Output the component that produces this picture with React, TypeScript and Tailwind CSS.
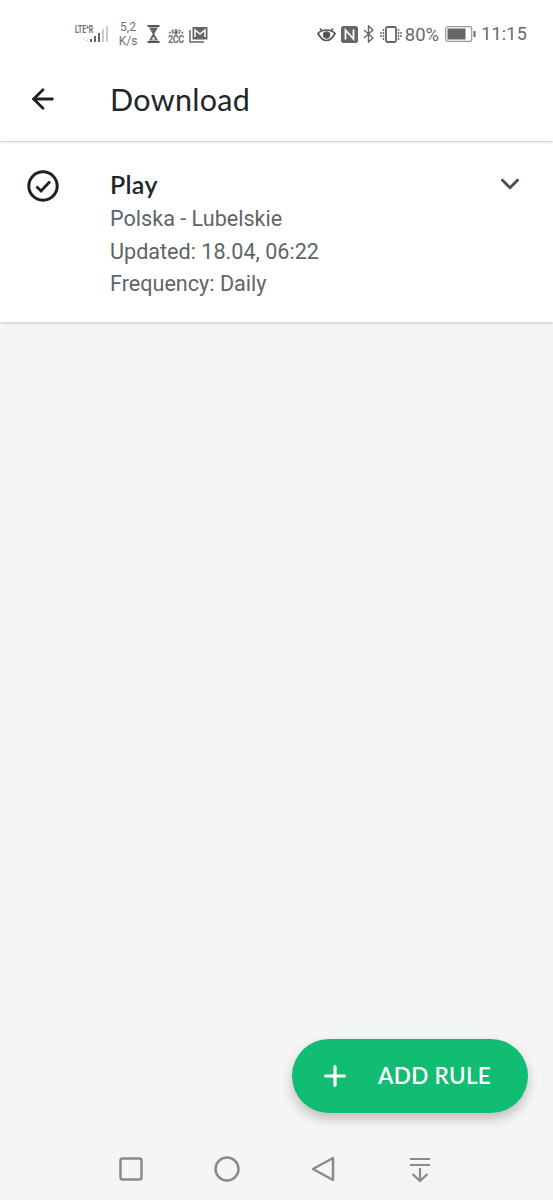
import { ArrowLeft, ChevronDown, Plus } from 'lucide-react'

const roboto = { fontFamily: 'Roboto, sans-serif' }
const heading = { fontFamily: 'Lato, sans-serif' }

function StatusLeft() {
  return (
    <div className="flex items-center text-[#6f6f6f]">
      <div className="relative w-[34px] h-[20px]">
        <span className="absolute left-0 top-[0px] text-[11px] leading-[11px] font-bold scale-x-[0.62] origin-left whitespace-nowrap" style={roboto}>LTE⁺R</span>
        <span className="absolute left-[7px] top-[11px] text-[7px] leading-[7px] text-[#aaa]">↑↓</span>
        <svg className="absolute left-[14px] top-[1px]" width="20" height="18" viewBox="0 0 20 18">
          <rect x="1" y="14" width="2" height="3" fill="#666" />
          <rect x="5" y="11" width="2" height="6" fill="#666" />
          <rect x="9" y="8" width="2" height="9" fill="#666" />
          <rect x="13" y="4" width="2" height="13" fill="#ccc" />
          <rect x="17" y="1" width="2" height="16" fill="#ccc" />
        </svg>
      </div>
      <div className="ml-[9px] w-[20px] text-center text-[12px] leading-[14px]" style={roboto}>5,2<br />K/s</div>
      <svg className="ml-[8px]" width="15" height="18" viewBox="0 0 15 18">
        <path d="M1.500 1h12M1.500 17h12" stroke="#555" strokeWidth="2" />
        <path d="M3 2.500h9L8.300 9 12 15.500H3L6.700 9z" fill="#666" />
        <path d="M5.500 14.500 7.500 12l2 2.500z" fill="#fff" />
      </svg>
      <div className="ml-[6px] relative w-[18px] h-[20px]">
        <svg className="absolute left-0 top-0" width="18" height="11" viewBox="0 0 18 11" fill="none" stroke="#666" strokeWidth="1.300">
          <path d="M2 9.500a8.500 8.500 0 0 1 14 0M5 9.500a4.800 4.800 0 0 1 8 0" strokeDasharray="2.500 1" />
          <circle cx="9" cy="9" r="1" fill="#666" />
        </svg>
        <span className="absolute left-[1px] top-[11px] text-[10px] leading-[10px] font-bold tracking-[-0.5px] scale-x-90 origin-left" style={roboto}>2CC</span>
      </div>
      <svg className="ml-[4px]" width="19" height="17" viewBox="0 0 19 17">
        <path d="M1 4v12h14" fill="none" stroke="#666" strokeWidth="1.500" />
        <rect x="3.500" y="1" width="15" height="12.500" fill="#666" />
        <path d="M6 11V4l5 4 5-4v7" fill="none" stroke="#fff" strokeWidth="1.500" />
      </svg>
    </div>
  )
}

function StatusRight() {
  return (
    <div className="flex items-center text-[#6a6a6a]">
      <svg width="19" height="15" viewBox="0 0 19 15" fill="none" stroke="#555" strokeWidth="1.700">
        <path d="M1 6.500C3.500 4 6 3 9.500 3S15.500 4 18 6.500C15.500 11 13 13.500 9.500 13.500S3.500 11 1 6.500z" />
        <circle cx="9.500" cy="8" r="2.800" fill="#555" />
        <path d="M3 1.500 5 4M16 1.500 14 4" />
      </svg>
      <svg className="ml-[5px]" width="17" height="17" viewBox="0 0 17 17">
        <rect width="17" height="17" rx="2.500" fill="#666" />
        <path d="M4.500 13.500V4L12.500 13V3.500" fill="none" stroke="#fff" strokeWidth="1.800" />
      </svg>
      <svg className="ml-[5px]" width="11" height="18" viewBox="0 0 11 18" fill="none" stroke="#666" strokeWidth="1.400">
        <path d="M1 5l9 8-4.500 4V1L10 5l-9 8" />
      </svg>
      <svg className="ml-[6px]" width="22" height="17" viewBox="0 0 22 17" fill="none" stroke="#666" strokeWidth="1.400">
        <rect x="6" y="1" width="10" height="15" rx="1.500" strokeWidth="1.800" />
        <path d="M3.500 3v11M1 6v5M18.500 3v11M21 6v5" strokeDasharray="2 1" />
      </svg>
      <span className="ml-[3px] mr-[2px] text-[18.500px] leading-none translate-y-[1px]" style={roboto}>80%</span>
      <svg className="ml-[4px]" width="31" height="16" viewBox="0 0 31 16">
        <rect x="0.700" y="0.700" width="26" height="14.600" rx="2" fill="none" stroke="#999" strokeWidth="1.200" />
        <rect x="2.500" y="2.500" width="18" height="11" fill="#666" />
        <rect x="28.500" y="5" width="2" height="6" fill="#666" />
      </svg>
      <span className="ml-[5px] text-[18px] leading-none tracking-[0.2px]" style={roboto}>11:15</span>
    </div>
  )
}

export default function App() {
  return (
    <div className="w-[553px] h-[1200px] bg-[#f5f5f5] flex flex-col overflow-hidden relative">
      <div className="bg-white h-[141px] shrink-0 shadow-[0_1px_3px_rgba(0,0,0,0.16)] z-10">
        <div className="h-[68px] flex items-center justify-between pl-[75px] pr-[26px]">
          <StatusLeft />
          <StatusRight />
        </div>
        <div className="flex items-center h-[62px] pl-[27px]">
          <ArrowLeft className="w-[32px] h-[32px] text-[#1c2122]" strokeWidth={2.100} />
          <h1 className="ml-[51px] text-[30.500px] leading-none text-[#212728] tracking-[0.3px]" style={heading}>Download</h1>
        </div>
      </div>

      <div className="mt-[1px] bg-white h-[180px] shrink-0 flex items-start pl-[27px] pr-[28px] shadow-[0_1px_3px_rgba(0,0,0,0.2)]">
        <svg className="mt-[28px] shrink-0" width="32" height="32" viewBox="0 0 32 32" fill="none" stroke="#1c2122">
          <circle cx="16" cy="16" r="14.200" strokeWidth="3" />
          <path d="M9.500 16.500l4.500 4.500 9-9.500" strokeWidth="2.800" />
        </svg>
        <div className="ml-[51px] flex-1 pt-[28px]">
          <p className="text-[25px] leading-[28px] font-semibold tracking-[0.3px] text-[#212728]" style={heading}>Play</p>
          <div className="mt-[5px] text-[21.600px] leading-[32.500px] text-[#5d6668]" style={roboto}>
            <p>Polska - Lubelskie</p>
            <p>Updated: 18.04, 06:22</p>
            <p>Frequency: Daily</p>
          </div>
        </div>
        <ChevronDown className="mt-[27px] w-[30px] h-[30px] text-[#4a5456]" strokeWidth={2.400} />
      </div>

      <div className="flex-1" />

      <button className="absolute left-[292px] top-[1039px] w-[236px] h-[74px] rounded-full bg-[#10bd72] flex items-center pl-[27px] text-white shadow-[0_6px_12px_rgba(0,0,0,0.22)]">
        <Plus className="w-[32px] h-[32px]" strokeWidth={2.400} />
        <span className="ml-[27px] text-[22.500px] font-semibold tracking-[0.3px]" style={heading}>ADD RULE</span>
      </button>

      <div className="h-[64px] shrink-0 flex items-start pl-[119px] pt-[21px]">
        <svg width="24" height="24" viewBox="0 0 24 24" fill="none" stroke="#8a8a8a" strokeWidth="2.500">
          <rect x="1.500" y="1.500" width="21" height="21" rx="2" />
        </svg>
        <svg className="ml-[71px] -mt-[1px]" width="26" height="26" viewBox="0 0 26 26" fill="none" stroke="#8a8a8a" strokeWidth="2.500">
          <circle cx="13" cy="13" r="11.500" />
        </svg>
        <svg className="ml-[71px] -mt-[1px]" width="24" height="26" viewBox="0 0 24 26" fill="none" stroke="#8a8a8a" strokeWidth="2.500" strokeLinejoin="round">
          <path d="M22 2v22L2 13z" />
        </svg>
        <svg className="ml-[74px]" width="22" height="26" viewBox="0 0 22 26" fill="none" stroke="#8a8a8a" strokeWidth="2.200">
          <path d="M1 2h20M1 8h20M11 11v13M3.500 17l7.500 7 7.500-7" />
        </svg>
      </div>
    </div>
  )
}
